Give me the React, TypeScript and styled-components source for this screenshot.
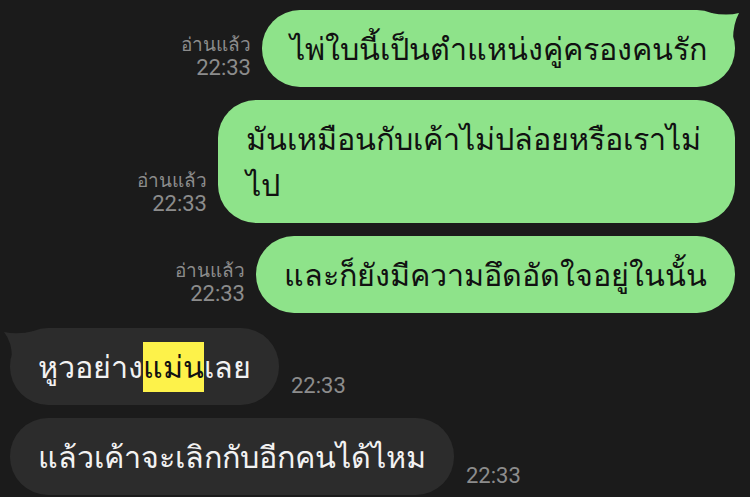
import React from "react";
import styled, { createGlobalStyle } from "styled-components";

const GlobalStyle = createGlobalStyle`
  html, body {
    margin: 0;
    padding: 0;
    background: #1b1b1b;
  }
  body {
    width: 750px;
    height: 497px;
    overflow: hidden;
    font-family: "Noto Sans", "DejaVu Sans", sans-serif;
  }
`;

const GREEN = "#8ee38a";
const GREY = "#2c2c2c";

const Chat = styled.div`
  display: flex;
  flex-direction: column;
  gap: 13px;
  padding: 10px 15px 0 10px;
`;

const Row = styled.div<{ $mine?: boolean; $first?: boolean }>`
  display: flex;
  align-items: flex-end;
  justify-content: ${(p) => (p.$mine ? "flex-end" : "flex-start")};
  gap: ${(p) => (p.$mine ? "11px" : "12px")};
  margin-top: ${(p) => (p.$first ? "2px" : "0")};
`;

const Meta = styled.div`
  display: flex;
  flex-direction: column;
  align-items: flex-end;
  color: #8c8c8c;
  padding-bottom: 7px;
`;

const ReadLabel = styled.span`
  font-size: 19px;
  line-height: 23px;
`;

const Time = styled.span`
  font-family: Roboto, "Noto Sans", sans-serif;
  font-size: 22px;
  line-height: 24px;
`;

const Bubble = styled.div<{ $mine?: boolean }>`
  position: relative;
  background: ${(p) => (p.$mine ? GREEN : GREY)};
  color: ${(p) => (p.$mine ? "#111" : "#f2f2f2")};
  border-radius: 38px;
  padding: 15px 28px 16px 28px;
  font-size: 30.5px;
  line-height: 46px;
  max-width: 517px;
  box-sizing: border-box;
`;

const TailSvg = styled.svg<{ $mine?: boolean }>`
  position: absolute;
  top: 0;
  width: 32px;
  height: 30px;
  ${(p) => (p.$mine ? "right: -8px;" : "left: -8px;")}
`;

const Mark = styled.span`
  background: #fdf24a;
  color: #111;
  padding: 3px 0 5px;
`;

const Tail = ({ mine }: { mine?: boolean }) => (
  <TailSvg $mine={mine} viewBox="0 0 32 30">
    {mine ? (
      <path d="M0 3 Q16 6 28 3 Q22 14 22 30 L0 30 Z" fill={GREEN} />
    ) : (
      <path d="M32 3 Q16 7 2 4 Q10 14 10 30 L32 30 Z" fill={GREY} />
    )}
  </TailSvg>
);

const ReadMeta = () => (
  <Meta>
    <ReadLabel>อ่านแล้ว</ReadLabel>
    <Time>22:33</Time>
  </Meta>
);

export default function App() {
  return (
    <>
      <GlobalStyle />
      <Chat>
        <Row $mine>
          <ReadMeta />
          <Bubble $mine>
            <Tail mine />
            ไพ่ใบนี้เป็นตำแหน่งคู่ครองคนรัก
          </Bubble>
        </Row>
        <Row $mine>
          <ReadMeta />
          <Bubble $mine>มันเหมือนกับเค้าไม่ปล่อยหรือเราไม่ไป</Bubble>
        </Row>
        <Row $mine>
          <ReadMeta />
          <Bubble $mine>และก็ยังมีความอึดอัดใจอยู่ในนั้น</Bubble>
        </Row>
        <Row $first>
          <Bubble>
            <Tail />
            หูวอย่าง<Mark>แม่น</Mark>เลย
          </Bubble>
          <Meta>
            <Time>22:33</Time>
          </Meta>
        </Row>
        <Row>
          <Bubble>แล้วเค้าจะเลิกกับอีกคนได้ไหม</Bubble>
          <Meta>
            <Time>22:33</Time>
          </Meta>
        </Row>
      </Chat>
    </>
  );
}
